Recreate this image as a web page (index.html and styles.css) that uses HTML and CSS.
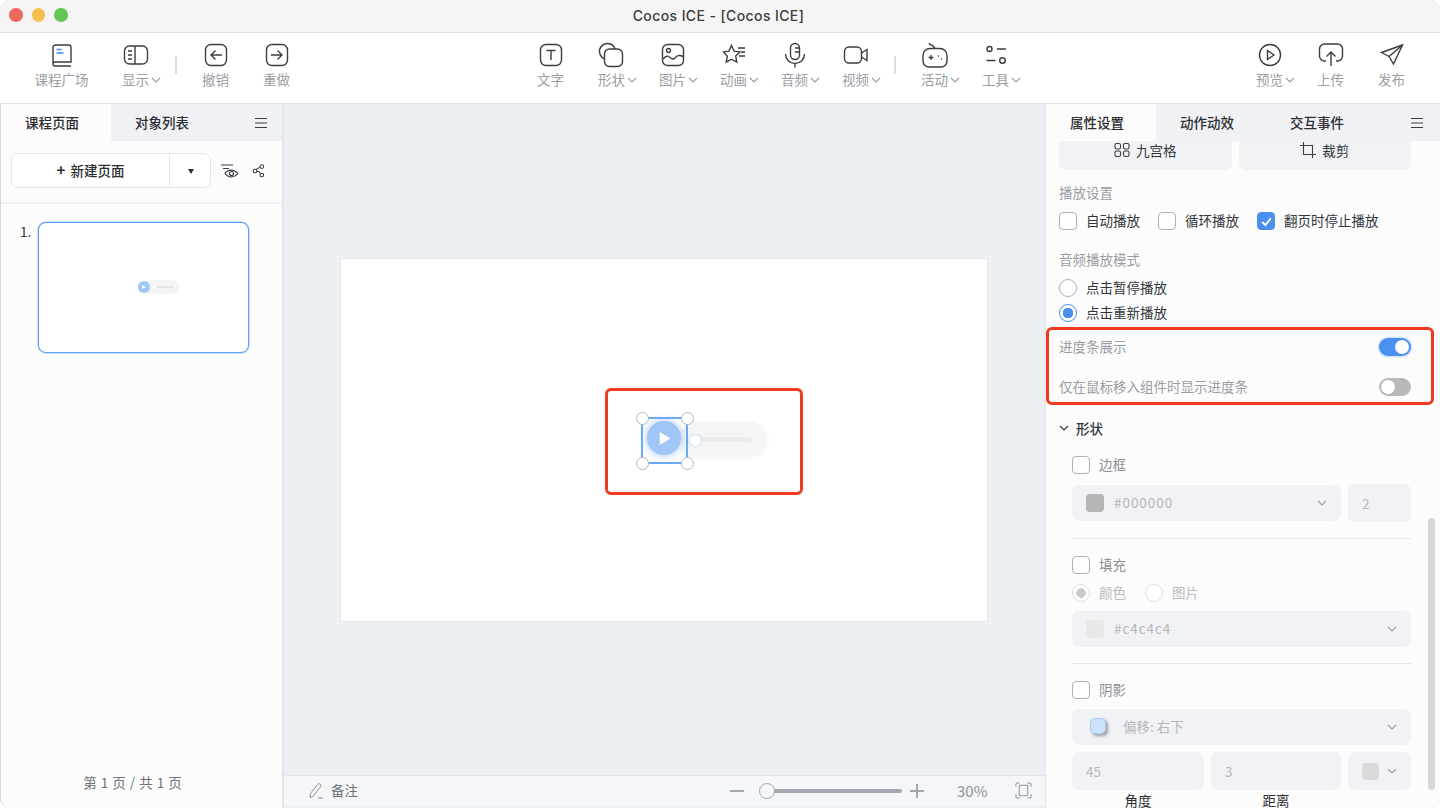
FILE: index.html
```html
<!DOCTYPE html>
<html lang="zh-CN">
<head>
  <meta charset="UTF-8">
  <title>Cocos ICE - [Cocos ICE]</title>
  <link rel="stylesheet" href="styles.css">
</head>
<body>
  <svg width="0" height="0" class="defs">
    <symbol id="chev" viewBox="0 0 10 6"><path d="M1 1l4 4 4-4" fill="none" stroke="currentColor" stroke-width="1.1"/></symbol>
    <symbol id="menu" viewBox="0 0 14 12"><path d="M1 1.5h12M1 6h12M1 10.5h12" fill="none" stroke="#3a3d42" stroke-width="1.2"/></symbol>
  </svg>
  <div class="window">
    <header class="titlebar">
      <div class="lights"><i class="light red"></i><i class="light yellow"></i><i class="light green"></i></div>
      <div class="title">Cocos ICE - [Cocos ICE]</div>
    </header>

    <nav class="toolbar">
      <div class="group">
        <div class="tool tool-wide">
          <svg class="icon" viewBox="0 0 28 28"><path d="M5 22.5V6.500A2.500 2.500 0 0 1 7.500 4h13A2.500 2.500 0 0 1 23 6.500V21H7.500a2 2 0 0 0-2.500 2 2 2 0 0 0 2.500 2H23"/><path d="M8.500 8.500h5M8.500 12h7" class="blue"/></svg>
          <span class="tool-label">课程广场</span>
        </div>
        <div class="tool">
          <svg class="icon" viewBox="0 0 28 28"><rect x="2.500" y="5" width="23" height="18" rx="5"/><path d="M13 5v18M6 10h4M6 14h4M6 18h4"/></svg>
          <span class="tool-label">显示<svg class="chev"><use href="#chev"/></svg></span>
        </div>
        <i class="tool-sep"></i>
        <div class="tool">
          <svg class="icon" viewBox="0 0 28 28"><rect x="3.500" y="3.500" width="21" height="21" rx="5.500"/><path d="M20 14H9M13.500 9.500L9 14l4.500 4.500"/></svg>
          <span class="tool-label">撤销</span>
        </div>
        <div class="tool">
          <svg class="icon" viewBox="0 0 28 28"><rect x="3.500" y="3.500" width="21" height="21" rx="5.500"/><path d="M8 14h11M14.500 9.500L19 14l-4.500 4.500"/></svg>
          <span class="tool-label">重做</span>
        </div>
      </div>

      <div class="group">
        <div class="tool">
          <svg class="icon" viewBox="0 0 28 28"><rect x="3.500" y="3.500" width="21" height="21" rx="5.500"/><path d="M9.500 9.500h9M14 9.500V19"/></svg>
          <span class="tool-label">文字</span>
        </div>
        <div class="tool">
          <svg class="icon" viewBox="0 0 28 28"><path d="M6.500 17.900A8 8 0 1 1 17.100 8"/><rect x="6.500" y="8" width="18" height="17.500" rx="5"/></svg>
          <span class="tool-label">形状<svg class="chev"><use href="#chev"/></svg></span>
        </div>
        <div class="tool">
          <svg class="icon" viewBox="0 0 28 28"><rect x="3.500" y="3.500" width="21" height="21" rx="5"/><circle cx="9.500" cy="9.500" r="2"/><path d="M4 18c3-3.500 5-3.500 7-1.500s3.500 2 5 .5 3-4 8-1.500"/></svg>
          <span class="tool-label">图片<svg class="chev"><use href="#chev"/></svg></span>
        </div>
        <div class="tool">
          <svg class="icon" viewBox="0 0 28 28"><path d="M11.500 4.500l2.600 5.600 5.900.8-4.300 4.200 1.100 6-5.300-2.900-5.300 2.900 1.100-6L3.500 10.900l5.400-.8z"/><path d="M18 7h7M21 11h4M19 15h6"/></svg>
          <span class="tool-label">动画<svg class="chev"><use href="#chev"/></svg></span>
        </div>
        <div class="tool">
          <svg class="icon" viewBox="0 0 28 28"><rect x="9.500" y="2.500" width="9" height="16" rx="4.500"/><path d="M4.500 13a9.500 9.500 0 0 0 19 0M14 22.500v4M14 7h4.500M14 11h4.500"/></svg>
          <span class="tool-label">音频<svg class="chev"><use href="#chev"/></svg></span>
        </div>
        <div class="tool">
          <svg class="icon" viewBox="0 0 28 28"><rect x="2.500" y="6" width="17" height="16" rx="4.500"/><path d="M19.500 12l5.500-3.500v11L19.500 16"/></svg>
          <span class="tool-label">视频<svg class="chev"><use href="#chev"/></svg></span>
        </div>
        <i class="tool-sep"></i>
        <div class="tool">
          <svg class="icon" viewBox="0 0 28 28"><path d="M8 2c1 2.500 3 1.500 4.500 3.500L14 7.500"/><path d="M9 7.500h10a7 7 0 0 1 7 7V20a6 6 0 0 1-6 6H8a6 6 0 0 1-6-6v-5.500a7 7 0 0 1 7-7z"/><path d="M7.500 16.500h5M10 14v5M17 15h1M20 18h1"/></svg>
          <span class="tool-label">活动<svg class="chev"><use href="#chev"/></svg></span>
        </div>
        <div class="tool">
          <svg class="icon" viewBox="0 0 28 28"><circle cx="7.500" cy="8" r="2.500"/><path d="M15 8h9M4.500 19.500h9"/><circle cx="20.500" cy="19.500" r="2.800"/></svg>
          <span class="tool-label">工具<svg class="chev"><use href="#chev"/></svg></span>
        </div>
      </div>

      <div class="group">
        <div class="tool">
          <svg class="icon" viewBox="0 0 28 28"><circle cx="14" cy="14" r="10.500"/><path d="M11.500 9.500l6.500 4.500-6.500 4.500z"/></svg>
          <span class="tool-label">预览<svg class="chev"><use href="#chev"/></svg></span>
        </div>
        <div class="tool">
          <svg class="icon" viewBox="0 0 28 28"><path d="M9 20H7.500A5 5 0 0 1 2.500 15V8A5 5 0 0 1 7.500 3h13a5 5 0 0 1 5 5v7a5 5 0 0 1-5 5H19"/><path d="M14 25V11M9.500 15.500L14 11l4.500 4.500"/></svg>
          <span class="tool-label">上传</span>
        </div>
        <div class="tool">
          <svg class="icon" viewBox="0 0 28 28"><path d="M24.500 4L3.500 11.500l7.500 4L15.500 23z"/><path d="M11 15.500L24.500 4"/></svg>
          <span class="tool-label">发布</span>
        </div>
      </div>
    </nav>

    <main class="main">
      <aside class="left-panel">
        <div class="tabs">
          <div class="tab active">课程页面</div>
          <div class="tab">对象列表</div>
          <svg class="tab-menu"><use href="#menu"/></svg>
        </div>
        <div class="page-actions">
          <div class="new-page">
            <div class="new-page-main"><b class="plus">+</b>新建页面</div>
            <div class="new-page-caret"></div>
          </div>
          <svg class="action-icon" viewBox="0 0 20 20"><path d="M1 4h12M3 7.500h6"/><path d="M5 12.500c3-4.500 9-4.500 13 0-4 4.500-10 4.500-13 0z"/><circle cx="11.500" cy="12.500" r="2"/></svg>
          <svg class="action-icon share" viewBox="0 0 20 20"><circle cx="13.500" cy="4.500" r="2.300"/><circle cx="13.500" cy="15" r="2.300"/><circle cx="5" cy="10" r="2.300"/><path d="M6.500 8.200l5-3M7.300 10.500h2.500l2 3"/></svg>
        </div>
        <div class="pages">
          <span class="page-no">1.</span>
          <div class="thumb">
            <div class="mini-pill"><i class="mini-track"></i></div>
            <div class="mini-btn"></div>
            <i class="mini-knob"></i>
          </div>
        </div>
        <div class="page-count">第 1 页 / 共 1 页</div>
      </aside>

      <section class="center">
        <div class="stage">
          <div class="canvas">
            <div class="player-pill"><i class="player-track"></i></div>
            <i class="player-knob"></i>
            <div class="player-btn"><svg viewBox="0 0 14 14"><path d="M2.500 1l10 6-10 6z" fill="#fff"/></svg></div>
            <div class="selection"><i class="handle tl"></i><i class="handle tr"></i><i class="handle bl"></i><i class="handle br"></i></div>
            <div class="mark"></div>
          </div>
        </div>
        <footer class="statusbar">
          <svg class="note-icon" viewBox="0 0 18 18"><path d="M3 15.500l.5-4L10.500 2.500a1.800 1.800 0 0 1 3 2.200L6.500 14z"/><path d="M11 16h5"/></svg>
          <span class="note-text">备注</span>
          <div class="zoom">
            <i class="zoom-minus"></i>
            <div class="slider"><i class="slider-knob"></i></div>
            <span class="zoom-plus"></span>
            <span class="zoom-value">30%</span>
            <svg class="fit-icon" viewBox="0 0 18 18"><rect x="4.500" y="3.500" width="9" height="11" rx="1"/><path d="M1 5V2.500A1.500 1.500 0 0 1 2.500 1H5M13 1h2.500A1.500 1.500 0 0 1 17 2.500V5M17 13v2.500a1.500 1.500 0 0 1-1.500 1.500H13M5 17H2.500A1.500 1.500 0 0 1 1 15.500V13"/></svg>
          </div>
        </footer>
      </section>

      <aside class="right-panel">
        <div class="tabs">
          <div class="tab active">属性设置</div>
          <div class="tab">动作动效</div>
          <div class="tab">交互事件</div>
          <svg class="tab-menu"><use href="#menu"/></svg>
        </div>
        <div class="props">
          <div class="scrollbar"></div>
          <div class="btn-row">
            <div class="img-btn"><svg viewBox="0 0 16 16"><rect x="1" y="1.500" width="5.500" height="5.500" rx="1.500"/><rect x="9.500" y="1.500" width="5.500" height="5.500" rx="1.500"/><rect x="1" y="9" width="5.500" height="5.500" rx="1.500"/><rect x="9.500" y="9" width="5.500" height="5.500" rx="1.500"/></svg>九宫格</div>
            <div class="img-btn"><svg viewBox="0 0 16 16"><path d="M3.500 0v12.500H16M0 3.500h12.500V16"/></svg>裁剪</div>
          </div>

          <div class="label label-play">播放设置</div>
          <div class="check-row">
            <label class="check"><i class="box"></i>自动播放</label>
            <label class="check"><i class="box"></i>循环播放</label>
            <label class="check"><i class="box checked"><svg viewBox="0 0 12 12"><path d="M2 6.500l3 2.800L10 3" fill="none" stroke="#fff" stroke-width="1.800"/></svg></i>翻页时停止播放</label>
          </div>

          <div class="label label-mode">音频播放模式</div>
          <label class="check radio-row first"><i class="radio"></i>点击暂停播放</label>
          <label class="check radio-row"><i class="radio on"></i>点击重新播放</label>

          <div class="mark-box">
            <div class="switch-row"><span class="label">进度条展示</span><i class="switch on"></i></div>
            <div class="switch-row second"><span class="label">仅在鼠标移入组件时显示进度条</span><i class="switch"></i></div>
          </div>

          <div class="section-head"><svg class="chev dark"><use href="#chev"/></svg>形状</div>

          <div class="shape">
            <label class="check muted"><i class="box"></i>边框</label>
            <div class="field-row mt9">
              <div class="field select grow"><i class="swatch grey"></i><span class="hex">#000000</span><svg class="chev field-chev"><use href="#chev"/></svg></div>
              <div class="field num tall">2</div>
            </div>
            <hr class="rule">
            <label class="check muted"><i class="box"></i>填充</label>
            <div class="fill-type">
              <label class="check faded"><i class="radio dim on-dim"></i>颜色</label>
              <label class="check faded"><i class="radio dim"></i>图片</label>
            </div>
            <div class="field select mt8"><i class="swatch pale"></i><span class="hex">#c4c4c4</span><svg class="chev field-chev"><use href="#chev"/></svg></div>
            <hr class="rule">
            <label class="check muted"><i class="box"></i>阴影</label>
            <div class="field select mt9"><i class="swatch shadow"></i><span>偏移: 右下</span><svg class="chev field-chev"><use href="#chev"/></svg></div>
            <div class="field-row mt7">
              <div class="field num tall w132">45</div>
              <div class="field num tall w130">3</div>
              <div class="field num tall w63"><i class="swatch check-swatch"></i><svg class="chev"><use href="#chev"/></svg></div>
            </div>
            <div class="caption-row"><span class="w132">角度</span><span class="w130">距离</span></div>
          </div>
        </div>
      </aside>
    </main>
  </div>
</body>
</html>
```

FILE: styles.css
```css
* {
  box-sizing: border-box;
}
html, body {
  margin: 0;
  height: 810px;
  overflow: hidden;
}
body {
  background-color: #fff;
  font-family: "Noto Sans CJK SC", "Liberation Sans", sans-serif;
  font-size: 13.5px;
  color: #33363a;
}
.defs {
  position: absolute;
}
.window {
  width: 1440px;
  height: 808px;
  display: flex;
  flex-direction: column;
  border-radius: 10px;
  background-color: #fff;
  box-shadow: inset 0 0 0 1px #d8d9dc;
}

/* title bar */
.titlebar {
  height: 33px;
  flex: none;
  display: flex;
  align-items: center;
  padding-bottom: 2px;
  background-color: #f5f5f5;
  border-bottom: 1px solid #dedede;
  border-radius: 10px 10px 0 0;
}
.lights {
  display: flex;
  gap: 9px;
  padding-left: 9px;
  width: 0;
}
.light {
  flex: none;
  width: 13.5px;
  height: 13.5px;
  border-radius: 50%;
}
.red { background-color: #ed6a5e; }
.yellow { background-color: #f5bf4f; }
.green { background-color: #62c554; }
.title {
  flex: 1;
  text-align: center;
  padding-right: 12px;
  font-family: Inter, "Liberation Sans", sans-serif;
  font-size: 14px;
  font-weight: 500;
  letter-spacing: 0.4px;
  color: #3c3c3c;
}

/* toolbar */
.toolbar {
  height: 71px;
  flex: none;
  display: flex;
  justify-content: space-between;
  padding: 0 18px 0 31px;
  background-color: #fff;
  border-bottom: 1px solid #e2e4e9;
}
.group {
  display: flex;
  align-items: flex-start;
}
.tool {
  width: 61px;
  display: flex;
  flex-direction: column;
  align-items: center;
  padding-top: 8px;
}
.tool-wide {
  margin-right: 13px;
}
.icon {
  width: 28px;
  height: 28px;
  fill: none;
  stroke: #3a3d42;
  stroke-width: 1.4;
}
.icon .blue {
  stroke: #3f8cf3;
}
.tool-label {
  display: flex;
  align-items: center;
  height: 20px;
  color: #9b9ea4;
  white-space: nowrap;
}
.chev {
  width: 10px;
  height: 6px;
  flex: none;
  color: #9a9ca3;
}
.tool-label .chev {
  margin: 1px -12px 0 2px;
}
.tool-sep {
  width: 2px;
  height: 18px;
  margin: 23px 8px 0;
  background-color: #dcdee2;
}
.group:first-child .tool-sep {
  margin-left: 9px;
}

/* main columns */
.main {
  flex: 1;
  min-height: 0;
  display: flex;
}
.tabs {
  height: 37px;
  flex: none;
  display: flex;
  align-items: center;
  background-color: #f0f1f5;
  position: relative;
}
.tab {
  width: 110px;
  height: 100%;
  display: flex;
  align-items: center;
  justify-content: center;
  padding-right: 8px;
  padding-bottom: 2px;
  color: #2c2e32;
  font-weight: 500;
}
.tab.active {
  background-color: #fcfcfd;
}
.tab-menu {
  width: 14px;
  height: 12px;
  margin-left: auto;
  margin-right: 15px;
}

/* left panel */
.left-panel {
  width: 283px;
  flex: none;
  display: flex;
  flex-direction: column;
  margin-left: 1px;
  background-color: #fcfcfd;
  border-right: 2px solid #e3e5ea;
  border-radius: 0 0 0 10px;
}
.left-panel .tab-menu {
  margin-right: 14px;
}
.page-actions {
  height: 63px;
  flex: none;
  display: flex;
  align-items: center;
  padding: 0 0 2px 10px;
  border-bottom: 2px solid #f0f1f3;
}
.new-page {
  width: 200px;
  height: 35px;
  display: flex;
  background-color: #fff;
  border: 1px solid #e4e5e8;
  border-radius: 7px;
}
.new-page-main {
  flex: 1;
  display: flex;
  align-items: center;
  justify-content: center;
  padding-bottom: 2px;
  color: #2c2e32;
  font-weight: 500;
  border-right: 1px solid #e4e5e8;
}
.plus {
  margin-right: 5px;
  font-size: 15px;
}
.new-page-caret {
  width: 40px;
  position: relative;
}
.new-page-caret::after {
  content: "";
  position: absolute;
  left: 18px;
  top: 15px;
  border: 3.5px solid transparent;
  border-top: 5px solid #2c2e32;
}
.action-icon {
  width: 20px;
  height: 20px;
  margin-left: 9px;
  fill: none;
  stroke: #3a3d42;
  stroke-width: 1.1;
}
.action-icon.share {
  width: 16px;
  height: 16px;
  margin-left: 11px;
  stroke-width: 1.3;
}
.pages {
  flex: 1;
  display: flex;
  align-items: flex-start;
  padding: 18px 0 0 19px;
}
.page-no {
  width: 18px;
  line-height: 18px;
  color: #33363a;
}
.thumb {
  width: 211px;
  height: 131px;
  position: relative;
  background-color: #fff;
  border: 1px solid #5ba2f8;
  border-radius: 8px;
  box-shadow: 0 0 0 0.5px #8fbffa;
}
.mini-pill {
  position: absolute;
  left: 101px;
  top: 57px;
  width: 40px;
  height: 14px;
  border-radius: 7px;
  background-color: #f5f5f5;
}
.mini-track {
  position: absolute;
  left: 13px;
  top: 6px;
  width: 21px;
  height: 2px;
  background-color: #e4e4e4;
}
.mini-btn {
  position: absolute;
  left: 98.5px;
  top: 58px;
  width: 12px;
  height: 12px;
  border-radius: 50%;
  background-color: #a0c6f7;
}
.mini-btn::after {
  content: "";
  position: absolute;
  left: 4.5px;
  top: 3.5px;
  border: 2.5px solid transparent;
  border-left: 4px solid #fff;
}
.mini-knob {
  position: absolute;
  left: 113px;
  top: 61.5px;
  width: 5px;
  height: 5px;
  border-radius: 50%;
  background-color: #fff;
  box-shadow: 0 0 1px #a0c6f7;
}
.page-count {
  height: 46px;
  flex: none;
  padding-top: 10px;
  padding-right: 18px;
  text-align: center;
  word-spacing: 1px;
  color: #6e7177;
}

/* canvas */
.center {
  flex: 1;
  min-width: 0;
  display: flex;
  flex-direction: column;
  background-color: #eceff4;
}
.stage {
  flex: 1;
  display: flex;
  align-items: center;
  justify-content: center;
  padding: 1px 1px 0 0;
  border-bottom: 1px solid #e2e4ea;
}
.canvas {
  width: 648px;
  height: 364px;
  position: relative;
  background-color: #fff;
  border: 1px solid #e4e6ea;
}
.player-pill {
  position: absolute;
  left: 339px;
  top: 163px;
  width: 86px;
  height: 32px;
  border-radius: 16px;
  background-color: #f5f5f5;
  box-shadow: 0 2px 6px rgba(0, 0, 0, 0.08);
}
.player-track {
  position: absolute;
  left: 14px;
  top: 15px;
  width: 57px;
  height: 5px;
  background-color: #ebebeb;
}
.player-knob {
  position: absolute;
  left: 349px;
  top: 176px;
  width: 11px;
  height: 11px;
  border-radius: 50%;
  background-color: #fff;
  box-shadow: 0 0 3px #a0c6f7;
}
.player-btn {
  position: absolute;
  left: 306px;
  top: 162px;
  width: 34px;
  height: 34px;
  display: flex;
  align-items: center;
  justify-content: center;
  border-radius: 50%;
  background-color: #a0c6f7;
  box-shadow: 0 0 9px rgba(120, 175, 245, 0.75);
}
.player-btn svg {
  width: 15px;
  height: 15px;
}
.selection {
  position: absolute;
  left: 300px;
  top: 158px;
  width: 47px;
  height: 47px;
  border: 2px solid #6aabf9;
}
.handle {
  position: absolute;
  width: 13px;
  height: 13px;
  border-radius: 50%;
  background-color: #fff;
  border: 1px solid #b5b8bd;
}
.tl { left: -7.5px; top: -7.5px; }
.tr { right: -7.5px; top: -7.5px; }
.bl { left: -7.5px; bottom: -7.5px; }
.br { right: -7.5px; bottom: -7.5px; }
.mark {
  position: absolute;
  left: 264px;
  top: 129px;
  width: 198px;
  height: 107px;
  border: 3px solid #ee3a1f;
  border-radius: 6px;
}

/* status bar */
.statusbar {
  height: 30px;
  flex: none;
  display: flex;
  align-items: center;
  margin-bottom: 2px;
  padding: 0 13px 1px 23px;
  background-color: #f5f6fa;
}
.note-icon {
  width: 18px;
  height: 18px;
  fill: none;
  stroke: #8d9096;
  stroke-width: 1;
}
.note-text {
  margin-left: 6px;
  padding-bottom: 2px;
  color: #6e7177;
}
.zoom {
  margin-left: auto;
  display: flex;
  align-items: center;
}
.zoom-minus {
  width: 14px;
  height: 2px;
  background-color: #a3a8b4;
}
.slider {
  width: 140px;
  height: 4px;
  margin-left: 18px;
  position: relative;
  border-radius: 2px;
  background-color: #a3a8b4;
}
.slider-knob {
  position: absolute;
  left: -3px;
  top: -6px;
  width: 16px;
  height: 16px;
  border-radius: 50%;
  background-color: #f5f6fa;
  border: 1px solid #a3a8b4;
}
.zoom-plus {
  width: 14px;
  height: 14px;
  margin-left: 8px;
  background:
    linear-gradient(#a3a8b4, #a3a8b4) center / 14px 2px no-repeat,
    linear-gradient(#a3a8b4, #a3a8b4) center / 2px 14px no-repeat;
}
.zoom-value {
  width: 33px;
  margin-left: 33px;
  color: #8f9299;
  font-size: 15px;
}
.fit-icon {
  width: 17px;
  height: 17px;
  margin-left: 25px;
  fill: none;
  stroke: #8f949e;
  stroke-width: 1.1;
}

/* right panel */
.right-panel {
  flex: none;
  width: 395px;
  display: flex;
  flex-direction: column;
  background-color: #fcfcfd;
  border-left: 1px solid #e3e5ea;
  border-radius: 0 0 10px 0;
}
.right-panel .tab-menu {
  margin-right: 16px;
}
.props {
  flex: 1;
  min-height: 0;
  position: relative;
  padding: 0 29px 0 13px;
}
.scrollbar {
  position: absolute;
  right: 5px;
  top: 377px;
  width: 7px;
  height: 272px;
  border-radius: 4px;
  background-color: #d8d8d8;
}
.btn-row {
  display: flex;
  gap: 7px;
}
.img-btn {
  flex: 1;
  height: 29px;
  display: flex;
  align-items: center;
  justify-content: center;
  gap: 6px;
  padding-bottom: 12px;
  border-radius: 0 0 7px 7px;
  background-color: #f1f2f6;
  color: #33363a;
}
.img-btn svg {
  width: 16px;
  height: 16px;
  fill: none;
  stroke: #3a3d42;
  stroke-width: 1.1;
}
.label {
  height: 20px;
  line-height: 18px;
  color: #9a9da3;
}
.label-play {
  margin-top: 13px;
}
.label-mode {
  margin-top: 19px;
}
.check-row {
  display: flex;
  gap: 18px;
  margin-top: 8px;
}
.check {
  display: flex;
  align-items: center;
  gap: 9px;
  height: 20px;
  padding-bottom: 2px;
  color: #33363a;
}
.box {
  width: 18px;
  height: 18px;
  flex: none;
  display: flex;
  align-items: center;
  justify-content: center;
  margin-top: 2px;
  background-color: #fff;
  border: 1px solid #aeb0b4;
  border-radius: 4px;
}
.box.checked {
  background-color: #4a90f0;
  border-color: #4a90f0;
}
.box svg {
  width: 13px;
  height: 13px;
}
.radio {
  width: 18px;
  height: 18px;
  flex: none;
  margin-top: 2px;
  background-color: #fff;
  border: 1px solid #aeb0b4;
  border-radius: 50%;
}
.radio.on {
  border-color: #4a90f0;
  background: radial-gradient(circle, #4a90f0 0 5px, #fff 5.5px);
}
.radio.dim {
  border-color: #dfdfdf;
}
.radio.on-dim {
  background: radial-gradient(circle, #cacaca 0 4.5px, #fff 5px);
}
.radio-row {
  margin-top: 5px;
}
.radio-row.first {
  margin-top: 8px;
}
.mark-box {
  margin: 4px -23px 0 -13px;
  height: 78px;
  padding: 7px 20px 0 10px;
  border: 3px solid #ee3a1f;
  border-radius: 6px;
}
.switch-row {
  display: flex;
  align-items: center;
  justify-content: space-between;
  height: 20px;
}
.switch-row.second {
  margin-top: 20px;
}
.switch {
  width: 32px;
  height: 18px;
  position: relative;
  border-radius: 9px;
  background-color: #b9b9b9;
}
.switch::after {
  content: "";
  position: absolute;
  left: 2px;
  top: 2px;
  width: 14px;
  height: 14px;
  border-radius: 50%;
  background-color: #fff;
}
.switch.on {
  background-color: #4a90f0;
  box-shadow: 0 0 0 1.5px #d6e6fc;
}
.switch.on::after {
  left: 16px;
}
.section-head {
  display: flex;
  align-items: center;
  gap: 7px;
  height: 20px;
  margin-top: 14px;
  padding-bottom: 2px;
  color: #33363a;
  font-weight: 500;
}
.chev.dark {
  color: #33363a;
}
.shape {
  margin-top: 16px;
  padding-left: 13px;
}
.check.muted {
  color: #8d9096;
}
.check.faded {
  color: #b9bbbe;
}
.fill-type {
  display: flex;
  gap: 19px;
  margin-top: 8px;
}
.field-row {
  display: flex;
  align-items: center;
  gap: 7px;
}
.field {
  height: 36px;
  display: flex;
  align-items: center;
  border-radius: 7px;
  background-color: #f1f2f6;
  color: #b5b6ba;
}
.select {
  padding: 0 14px 1px;
}
.select span {
  padding-bottom: 2px;
}
.hex {
  letter-spacing: 0.95px;
}
.grow {
  flex: 1;
}
.mt7 { margin-top: 7px; }
.mt8 { margin-top: 8px; }
.mt9 { margin-top: 9px; }
.tall {
  height: 38px;
}
.num {
  width: 63px;
  padding-left: 14px;
  flex: none;
}
.w132 { width: 132px; }
.w130 { width: 130px; }
.w63 { width: 63px; }
.swatch {
  width: 18px;
  height: 18px;
  flex: none;
  margin-right: 10px;
  border-radius: 4px;
}
.swatch.grey { background-color: #b5b5b5; }
.swatch.pale { background-color: #e8e8e8; }
.swatch.shadow {
  width: 16px;
  height: 16px;
  margin: -2px 17px 0 4px;
  background-color: #cfe2fb;
  border: 1px solid #a9caf5;
  border-radius: 5px;
  box-shadow: 2px 2px 3px rgba(0, 0, 0, 0.35);
}
.swatch.check-swatch {
  width: 17px;
  height: 17px;
  margin-right: 8px;
  background-color: #dadadc;
}
.field-chev {
  margin-left: auto;
}
.rule {
  height: 1px;
  margin: 16px 0;
  border: 0;
  background-color: #e6e7ea;
}
.caption-row {
  display: flex;
  gap: 7px;
  height: 16px;
  margin-top: 2px;
  line-height: 16px;
  color: #2c2e32;
}
.caption-row span {
  text-align: center;
}
```
